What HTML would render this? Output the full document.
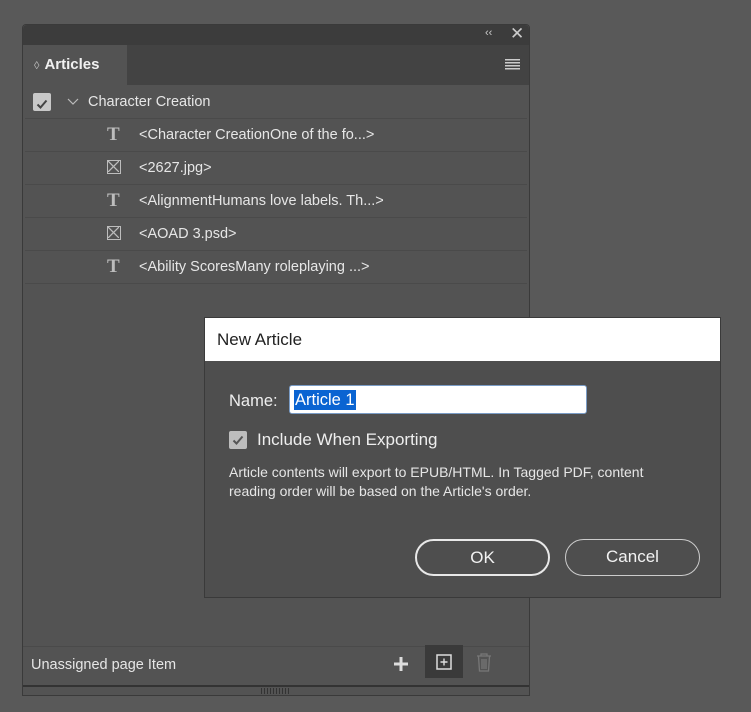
<!DOCTYPE html>
<html><head><style>
body{margin:0;width:751px;height:712px;background:#595959;font-family:"Liberation Sans","DejaVu Sans",sans-serif;position:relative;overflow:hidden;color:#ddd}
.abs{position:absolute}
.panel{left:22px;top:24px;width:508px;height:672px;background:#535353;border:1px solid #3a3a3a;box-sizing:border-box;border-radius:4px 4px 0 0}
.tb{left:0;top:0;width:506px;height:20px;background:#3c3c3c;border-radius:4px 4px 0 0}
.strip{left:0;top:20px;width:506px;height:40px;background:#434343}
.tab{left:0;top:20px;width:104px;height:40px;background:#535353;color:#f0f0f0;font-weight:bold;font-size:15px;line-height:40px}
.row{left:2px;width:502px;height:32px;border-bottom:1px solid #4a4a4a;font-size:14.5px;line-height:32px;color:#e6e6e6}
.T{position:absolute;left:82px;font-family:"Liberation Serif",serif;font-weight:bold;font-size:19px;color:#bdbdbd}
.X{position:absolute;left:82px;top:8px;width:14px;height:14px;border:1.5px solid #bdbdbd;box-sizing:border-box}
.txt{position:absolute;left:114px}
.dlg{left:204px;top:317px;width:517px;height:281px;background:#4e4e4e;border:1px solid #3a3a3a;box-sizing:border-box}
.btn{top:221px;height:37px;border:2px solid #e8e8e8;border-radius:19px;box-sizing:border-box;text-align:center;line-height:33px;font-size:17px;color:#f2f2f2}
</style></head><body>
<div class="abs panel">
 <div class="abs tb"><span class="abs" style="left:462px;top:2px;font-size:11px;color:#ccc">‹‹</span><span class="abs" style="left:487px;top:-1px;font-size:17px;color:#ccc">✕</span></div>
 <div class="abs strip"></div>
 <div class="abs tab"><span style="font-size:11px;color:#bbb;margin:0 5px 0 11px;font-weight:normal">◊</span>Articles</div>
 <div class="abs" style="left:482px;top:34px;width:15px;height:11px;background:repeating-linear-gradient(#ccc 0 1.5px,transparent 1.5px 3px)"></div>
 <div class="abs row" style="top:61px">
  <div class="abs" style="left:8px;top:7px;width:18px;height:18px;background:#c8c8c8;border-radius:2px"><svg width="18" height="18"><path d="M4.5 9.5L7.5 12.5L13.5 5.5" stroke="#444" stroke-width="2" fill="none"/></svg></div>
  <svg class="abs" style="left:42px;top:12px" width="12" height="8"><path d="M1 1L6 6L11 1" stroke="#bbb" stroke-width="1.2" fill="none"/></svg>
  <span class="abs" style="left:63px">Character Creation</span>
 </div>
 <div class="abs row" style="top:94px"><span class="T">T</span><span class="txt">&lt;Character CreationOne of the fo...&gt;</span></div>
 <div class="abs row" style="top:127px"><span class="X"><svg width="11" height="11" style="position:absolute;left:0;top:0"><path d="M0 0L11 11M11 0L0 11" stroke="#bdbdbd" stroke-width="1.3"/></svg></span><span class="txt">&lt;2627.jpg&gt;</span></div>
 <div class="abs row" style="top:160px"><span class="T">T</span><span class="txt">&lt;AlignmentHumans love labels. Th...&gt;</span></div>
 <div class="abs row" style="top:193px"><span class="X"><svg width="11" height="11" style="position:absolute;left:0;top:0"><path d="M0 0L11 11M11 0L0 11" stroke="#bdbdbd" stroke-width="1.3"/></svg></span><span class="txt">&lt;AOAD 3.psd&gt;</span></div>
 <div class="abs row" style="top:226px"><span class="T">T</span><span class="txt">&lt;Ability ScoresMany roleplaying ...&gt;</span></div>
 <div class="abs" style="left:0;top:621px;width:506px;height:1px;background:#4a4a4a"></div>
 <span class="abs" style="left:8px;top:632px;font-size:14.5px;color:#e6e6e6">Unassigned page Item</span>
 <svg class="abs" style="left:370px;top:631px" width="16" height="16"><path d="M8 1V15M1 8H15" stroke="#ddd" stroke-width="3"/></svg>
 <div class="abs" style="left:402px;top:620px;width:38px;height:33px;background:#3a3a3a"><svg class="abs" style="left:11px;top:9px" width="16" height="16"><rect x="1" y="1" width="14" height="14" fill="none" stroke="#ddd" stroke-width="1.5"/><path d="M8 4.5V11.5M4.5 8H11.5" stroke="#ddd" stroke-width="1.4"/></svg></div>
 <svg class="abs" style="left:453px;top:628px" width="16" height="19"><path d="M1 3H15M5 3V1H11V3M2.5 3.5L3.5 18H12.5L13.5 3.5M6 6V16M8 6V16M10 6V16" stroke="#777" stroke-width="1.3" fill="none"/></svg>
 <div class="abs" style="left:0;top:660px;width:506px;height:2px;background:#333"></div>
 <div class="abs" style="left:238px;top:663px;width:30px;height:6px;background:repeating-linear-gradient(90deg,#333 0 1px,transparent 1px 3px)"></div>
</div>
<div class="abs dlg">
 <div class="abs" style="left:0;top:0;width:515px;height:43px;background:#fff;color:#222;font-size:17px;line-height:43px;padding-left:12px;box-sizing:border-box">New Article</div>
 <span class="abs" style="left:24px;top:74px;font-size:16.5px;color:#eee">Name:</span>
 <div class="abs" style="left:84px;top:67px;width:298px;height:29px;background:#fff;border:1px solid #7a9cc6;border-radius:3px;box-sizing:border-box"><span class="abs" style="left:4px;top:4px;background:#0a64d2;color:#fff;font-size:16.5px;line-height:20px;padding:0 1px">Article 1</span></div>
 <div class="abs" style="left:24px;top:113px;width:18px;height:18px;background:#bdbdbd;border-radius:2px"><svg width="18" height="18"><path d="M4.5 9.5L7.5 12.5L13.5 5.5" stroke="#555" stroke-width="2" fill="none"/></svg></div>
 <span class="abs" style="left:52px;top:112px;font-size:17px;color:#eee">Include When Exporting</span>
 <div class="abs" style="left:24px;top:145px;font-size:14px;line-height:19px;color:#e6e6e6;width:455px">Article contents will export to EPUB/HTML. In Tagged PDF, content reading order will be based on the Article's order.</div>
 <div class="abs btn" style="left:210px;width:135px;border-width:2.5px">OK</div>
 <div class="abs btn" style="left:360px;width:135px;border-width:1.5px;border-color:#ccc">Cancel</div>
</div>
</body></html>
